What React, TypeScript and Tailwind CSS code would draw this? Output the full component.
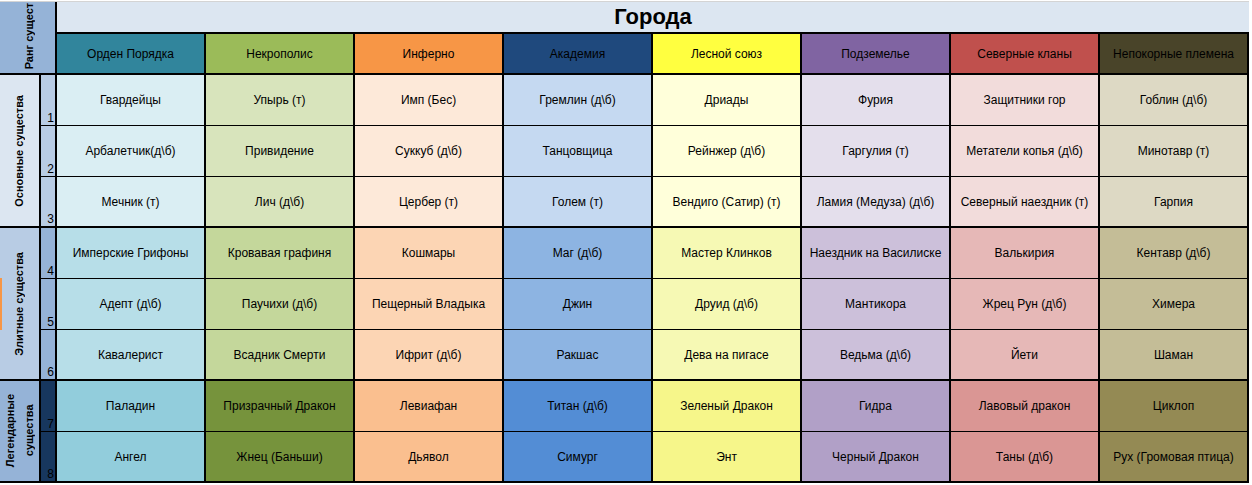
import React from 'react';

type Town = {
  name: string;
  head: string;
  tints: [string, string, string];
  units: string[];
};

const TOWNS: Town[] = [
  {
    name: 'Орден Порядка',
    head: 'bg-[#31859C]',
    tints: ['bg-[#DAEEF3]', 'bg-[#B7DEE8]', 'bg-[#92CDDC]'],
    units: ['Гвардейцы', 'Арбалетчик(д\\б)', 'Мечник (т)', 'Имперские Грифоны', 'Адепт (д\\б)', 'Кавалерист', 'Паладин', 'Ангел'],
  },
  {
    name: 'Некрополис',
    head: 'bg-[#9BBB59]',
    tints: ['bg-[#D8E4BC]', 'bg-[#C4D79B]', 'bg-[#76933C]'],
    units: ['Упырь (т)', 'Привидение', 'Лич (д\\б)', 'Кровавая графиня', 'Паучихи (д\\б)', 'Всадник Смерти', 'Призрачный Дракон', 'Жнец (Баньши)'],
  },
  {
    name: 'Инферно',
    head: 'bg-[#F79646]',
    tints: ['bg-[#FDE9D9]', 'bg-[#FCD5B4]', 'bg-[#FABF8F]'],
    units: ['Имп (Бес)', 'Суккуб (д\\б)', 'Цербер (т)', 'Кошмары', 'Пещерный Владыка', 'Ифрит (д\\б)', 'Левиафан', 'Дьявол'],
  },
  {
    name: 'Академия',
    head: 'bg-[#1F497D]',
    tints: ['bg-[#C5D9F1]', 'bg-[#8DB4E2]', 'bg-[#538DD5]'],
    units: ['Гремлин (д\\б)', 'Танцовщица', 'Голем (т)', 'Маг (д\\б)', 'Джин', 'Ракшас', 'Титан (д\\б)', 'Симург'],
  },
  {
    name: 'Лесной союз',
    head: 'bg-[#FFFF40]',
    tints: ['bg-[#FFFFDA]', 'bg-[#F6F9B4]', 'bg-[#F6F68A]'],
    units: ['Дриады', 'Рейнжер (д\\б)', 'Вендиго (Сатир) (т)', 'Мастер Клинков', 'Друид (д\\б)', 'Дева на пигасе', 'Зеленый Дракон', 'Энт'],
  },
  {
    name: 'Подземелье',
    head: 'bg-[#8064A2]',
    tints: ['bg-[#E4DFEC]', 'bg-[#CCC0DA]', 'bg-[#B1A0C7]'],
    units: ['Фурия', 'Гаргулия (т)', 'Ламия (Медуза) (д\\б)', 'Наездник на Василиске', 'Мантикора', 'Ведьма (д\\б)', 'Гидра', 'Черный Дракон'],
  },
  {
    name: 'Северные кланы',
    head: 'bg-[#C0504D]',
    tints: ['bg-[#F2DCDB]', 'bg-[#E6B8B7]', 'bg-[#DA9694]'],
    units: ['Защитники гор', 'Метатели копья (д\\б)', 'Северный наездник (т)', 'Валькирия', 'Жрец Рун (д\\б)', 'Йети', 'Лавовый дракон', 'Таны (д\\б)'],
  },
  {
    name: 'Непокорные племена',
    head: 'bg-[#494429]',
    tints: ['bg-[#DDD9C4]', 'bg-[#C4BD97]', 'bg-[#948A54]'],
    units: ['Гоблин (д\\б)', 'Минотавр (т)', 'Гарпия', 'Кентавр (д\\б)', 'Химера', 'Шаман', 'Циклоп', 'Рух (Громовая птица)'],
  },
];

// rank rows: which tint group, whether a group starts / ends here
const GROUPS = [
  { label: ['Основные существа'], span: 'row-span-3', labelBg: 'bg-[#DCE6F1]', numBg: 'bg-[#B8CCE4]', rows: [1, 2, 3] },
  { label: ['Элитные существа'], span: 'row-span-3', labelBg: 'bg-[#B8CCE4]', numBg: 'bg-[#95B3D7]', rows: [4, 5, 6] },
  { label: ['Легендарные', 'существа'], span: 'row-span-2', labelBg: 'bg-[#95B3D7]', numBg: 'bg-[#17375E]', rows: [7, 8] },
];

function VerticalText({ lines }: { lines: string[] }) {
  return (
    <span className="rotate-180 whitespace-nowrap text-center text-[11px] font-bold leading-[19px] [writing-mode:vertical-rl]">
      {lines.map((line) => (
        <span key={line} className="block">
          {line}
        </span>
      ))}
    </span>
  );
}

export default function App() {
  return (
    <div className="relative h-[485px] w-[1252px] overflow-hidden bg-white text-black [font-family:'Liberation_Sans',Arial,sans-serif]">
      <div className="grid grid-cols-[41px_16px_repeat(8,149px)] grid-rows-[2px_32px_41px_repeat(8,51px)]">
        <div className="col-span-10 border-b border-[#d4d4d4] bg-white" />

        <div className="col-span-2 row-span-2 flex flex-col items-center justify-end overflow-hidden border-r-2 border-b-2 border-black bg-[#95B3D7] pb-[4px] pl-[4px]">
          <span className="shrink-0 rotate-180 whitespace-nowrap text-[11px] font-bold leading-none [writing-mode:vertical-rl]">
            Ранг существ
          </span>
        </div>
        <div className="col-span-8 flex items-center justify-center border-b-2 border-black bg-[#DCE6F1] text-[22px] font-bold leading-none">
          Города
        </div>

        {TOWNS.map((town) => (
          <div
            key={town.name}
            className={`flex items-center justify-center border-r-2 border-b-2 border-black text-[12px] ${town.head}`}
          >
            {town.name}
          </div>
        ))}

        {GROUPS.map((group, g) =>
          group.rows.map((rank, i) => {
            const last = i === group.rows.length - 1;
            const rowBorder = last ? 'border-b-2' : 'border-b';
            return (
              <React.Fragment key={rank}>
                {i === 0 ? (
                  <div
                    className={`${group.span} flex items-center justify-center overflow-hidden border-r-2 border-b-2 border-black ${group.labelBg}`}
                  >
                    <VerticalText lines={group.label} />
                  </div>
                ) : null}
                <div
                  className={`flex items-end justify-end border-r-2 border-black pr-[1px] pb-[1px] text-[12px] leading-none ${rowBorder} ${group.numBg}`}
                >
                  {rank}
                </div>
                {TOWNS.map((town) => (
                  <div
                    key={town.name}
                    className={`flex items-center justify-center whitespace-nowrap border-r-2 border-black text-[12px] ${rowBorder} ${town.tints[g]}`}
                  >
                    {town.units[rank - 1]}
                  </div>
                ))}
              </React.Fragment>
            );
          }),
        )}
      </div>

      {/* excel row selection marker */}
      <div className="absolute left-0 top-[278px] h-[52px] w-[2px] bg-[#F79646]" />
    </div>
  );
}
